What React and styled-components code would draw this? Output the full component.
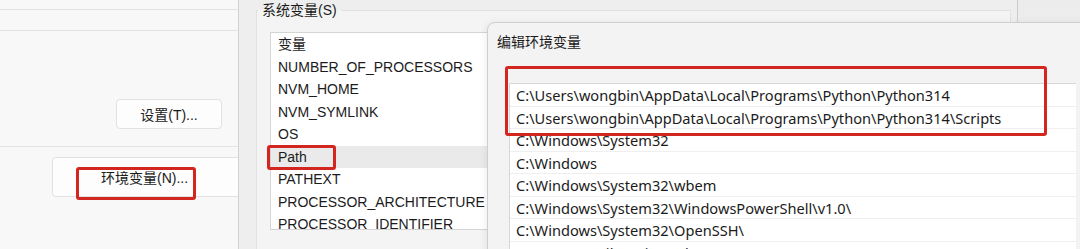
import React from 'react';
import styled, { createGlobalStyle } from 'styled-components';

const GlobalStyle = createGlobalStyle`
  html, body {
    margin: 0;
    padding: 0;
    background: #f8f8f8;
  }
  body {
    font-family: "Liberation Sans", "Noto Sans CJK SC", sans-serif;
    color: #1b1b1b;
  }
`;

const Screen = styled.div`
  position: relative;
  display: flex;
  width: 1080px;
  height: 249px;
  overflow: hidden;
  font-size: 14px;
`;

const AdvancedPanel = styled.div`
  display: flex;
  flex-direction: column;
  width: 238px;
  flex-shrink: 0;
  padding-top: 9px;
  background: #f8f8f8;
  border-right: 1px solid #d2d2d2;
  overflow: hidden;
`;

const Rule = styled.div`
  height: 1px;
  background: #e4e4e4;
  margin-bottom: ${p => p.gap || 0}px;
`;

const WinButton = styled.div`
  display: flex;
  align-items: center;
  justify-content: ${p => (p.$wide ? 'flex-start' : 'center')};
  box-sizing: border-box;
  height: ${p => (p.$wide ? 40 : 30)}px;
  width: ${p => (p.$wide ? 210 : 106)}px;
  margin: ${p => (p.$wide ? '0 0 0 52px' : '0 16px 0 0')};
  padding-left: ${p => (p.$wide ? 48 : 0)}px;
  align-self: ${p => (p.$wide ? 'flex-start' : 'flex-end')};
  background: #fdfdfd;
  border: 1px solid #e2e2e2;
  border-radius: 4px;
  font-size: 14px;
  color: #1b1b1b;
`;

const EnvWindow = styled.div`
  width: 778px;
  flex-shrink: 0;
  background: #eeeeee;
  border-right: 1px solid #cdcdcd;
`;

const GroupBox = styled.fieldset`
  margin: 0 0 0 17px;
  padding: 0;
  width: 745px;
  height: 260px;
  box-sizing: border-box;
  border: 1px solid #e1e1e1;
  background: #f4f4f4;
`;

const Legend = styled.legend`
  margin-left: 1px;
  padding: 0 4px;
  font-size: 14px;
  line-height: 20px;
  color: #1b1b1b;
`;

const VarList = styled.div`
  margin: 12px 0 0 13px;
  width: 740px;
  height: 198px;
  box-sizing: border-box;
  background: #ffffff;
  border: 1px solid #d4d4d4;
  overflow: hidden;
`;

const VarRow = styled.div`
  height: 22.5px;
  line-height: 22.5px;
  padding-left: 7px;
  font-size: 14px;
  white-space: nowrap;
  background: ${p => (p.$selected ? '#eaeaea' : 'transparent')};
`;

const Desk = styled.div`
  flex: 1;
  background: linear-gradient(#ececec, #eeeeee);
`;

const EditDialog = styled.div`
  position: absolute;
  left: 487px;
  top: 22px;
  width: 640px;
  height: 260px;
  display: flex;
  flex-direction: column;
  background: #f3f3f3;
  border: 1px solid #cfcfcf;
  border-top-left-radius: 8px;
  box-shadow: -2px 0 6px rgba(0, 0, 0, 0.06);
`;

const DialogTitle = styled.div`
  padding: 9px 0 0 9px;
  height: 20px;
  line-height: 20px;
  font-size: 14px;
  color: #1b1b1b;
`;

const PathList = styled.div`
  margin: 31px 0 0 21px;
  width: 566px;
  background: #ffffff;
  border-top: 1px solid #d6d6d6;
  border-left: 1px solid #d6d6d6;
`;

const PathRow = styled.div`
  box-sizing: border-box;
  height: 22.5px;
  line-height: 22px;
  padding-left: 6px;
  border-bottom: 1px solid #efefef;
  font-family: "Noto Sans", "Liberation Sans", sans-serif;
  font-size: 14.6px;
  white-space: nowrap;
`;

const Mark = styled.div`
  position: absolute;
  box-sizing: border-box;
  border: 3px solid #d3261f;
  border-radius: 3px;
  pointer-events: none;
`;

const systemVars = [
  'NUMBER_OF_PROCESSORS',
  'NVM_HOME',
  'NVM_SYMLINK',
  'OS',
  'Path',
  'PATHEXT',
  'PROCESSOR_ARCHITECTURE',
  'PROCESSOR_IDENTIFIER',
];

const paths = [
  'C:\\Users\\wongbin\\AppData\\Local\\Programs\\Python\\Python314',
  'C:\\Users\\wongbin\\AppData\\Local\\Programs\\Python\\Python314\\Scripts',
  'C:\\Windows\\System32',
  'C:\\Windows',
  'C:\\Windows\\System32\\wbem',
  'C:\\Windows\\System32\\WindowsPowerShell\\v1.0\\',
  'C:\\Windows\\System32\\OpenSSH\\',
  'C:\\Program Files\\Git\\cmd',
];

const App = () => (
  <>
    <GlobalStyle />
    <Screen>
      <AdvancedPanel>
        <Rule gap={20} />
        <Rule gap={68} />
        <WinButton>设置(T)...</WinButton>
        <Rule style={{ marginTop: 17, marginBottom: 10 }} />
        <WinButton $wide>环境变量(N)...</WinButton>
      </AdvancedPanel>

      <EnvWindow>
        <GroupBox>
          <Legend>系统变量(S)</Legend>
          <VarList>
            <VarRow>变量</VarRow>
            {systemVars.map(name => (
              <VarRow key={name} $selected={name === 'Path'}>
                {name}
              </VarRow>
            ))}
          </VarList>
        </GroupBox>
      </EnvWindow>

      <Desk />

      <EditDialog>
        <DialogTitle>编辑环境变量</DialogTitle>
        <PathList>
          {paths.map(p => (
            <PathRow key={p}>{p}</PathRow>
          ))}
        </PathList>
      </EditDialog>

      <Mark style={{ left: 76, top: 167, width: 120, height: 33 }} />
      <Mark style={{ left: 267, top: 145, width: 69, height: 25 }} />
      <Mark style={{ left: 505, top: 66, width: 542, height: 70 }} />
    </Screen>
  </>
);

export default App;
